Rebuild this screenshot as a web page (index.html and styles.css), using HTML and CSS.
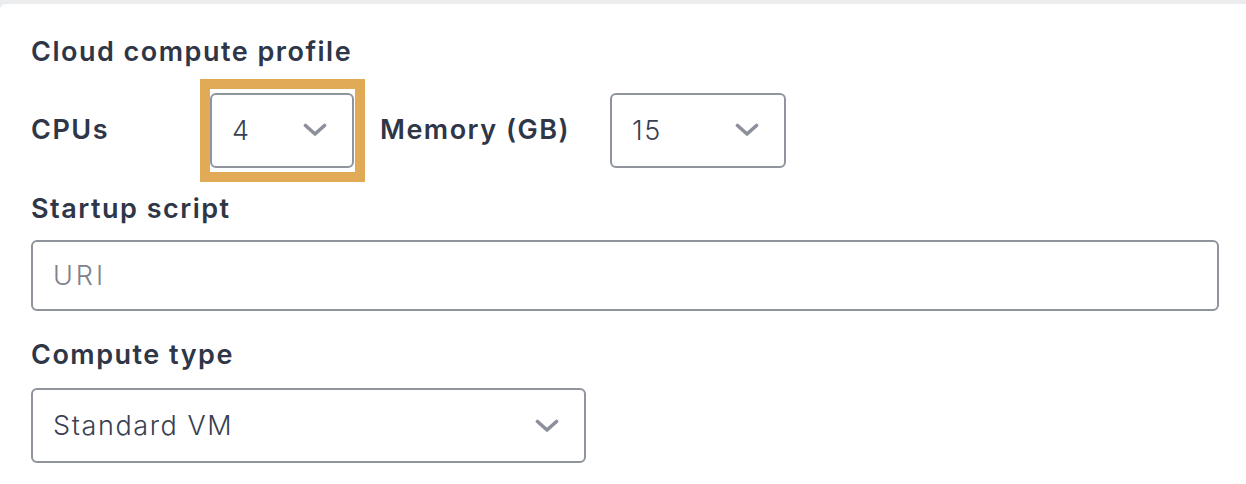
FILE: index.html
```html
<!DOCTYPE html>
<html>
<head>
<meta charset="utf-8">
<link rel="stylesheet" href="styles.css">
</head>
<body>
<div class="card">
  <div class="heading">Cloud compute profile</div>
  <div class="row">
    <div class="label cpu-label">CPUs</div>
    <div class="highlight">
      <div class="select small cpu-select"><span class="value">4</span><svg class="chev" viewBox="0 0 24 14" width="24" height="14"><path d="M2.5 2.5 L12 11 L21.5 2.5" fill="none" stroke="#8b909a" stroke-width="3.6" stroke-linecap="round" stroke-linejoin="round"/></svg></div>
    </div>
    <div class="label mem-label">Memory (GB)</div>
    <div class="select small mem-select"><span class="value">15</span><svg class="chev" viewBox="0 0 24 14" width="24" height="14"><path d="M2.5 2.5 L12 11 L21.5 2.5" fill="none" stroke="#8b909a" stroke-width="3.6" stroke-linecap="round" stroke-linejoin="round"/></svg></div>
  </div>
  <div class="label field-label startup-label">Startup script</div>
  <div class="input"><span class="placeholder">URI</span></div>
  <div class="label field-label compute-label">Compute type</div>
  <div class="select wide"><span class="value">Standard VM</span><svg class="chev" viewBox="0 0 24 14" width="24" height="14"><path d="M2.5 2.5 L12 11 L21.5 2.5" fill="none" stroke="#8b909a" stroke-width="3.6" stroke-linecap="round" stroke-linejoin="round"/></svg></div>
</div>
</body>
</html>
```
FILE: styles.css
```css
html, body {
  margin: 0;
  padding: 0;
}
body {
  background: #ebecee;
  font-family: Inter, "Open Sans", "Liberation Sans", sans-serif;
  width: 1246px;
  height: 484px;
  overflow: hidden;
}
.card {
  margin-top: 4px;
  background: #ffffff;
  border-top-left-radius: 6px;
  height: 480px;
  padding: 32px 27px 0 31px;
  box-sizing: border-box;
}
.heading, .label {
  font-size: 27px;
  font-weight: 600;
  color: #2e3647;
  line-height: 32px;
  letter-spacing: 1.5px;
}
.row {
  display: flex;
  align-items: center;
  margin-top: 10px;
  height: 104px;
}
.cpu-label {
  width: 169px;
}
.highlight {
  border: 10px solid #e0aa57;
  padding: 4px 1px 4px 0;
  display: flex;
}
.mem-label {
  margin-left: 15px;
  width: 230px;
}
.select, .input {
  box-sizing: border-box;
  border: 2px solid #8f949d;
  border-radius: 6px;
  background: #fff;
  display: flex;
  align-items: center;
  font-size: 27px;
  color: #394052;
}
.select {
  justify-content: space-between;
  padding: 0 25px 0 20px;
}
.small {
  height: 75px;
}
.cpu-select {
  width: 144px;
}
.mem-select {
  width: 176px;
}
.value {
  font-weight: 300;
  letter-spacing: 1.6px;
}
.field-label.startup-label {
  margin-top: 11px;
}
.input {
  margin-top: 15px;
  height: 71px;
  padding: 0 20px;
}
.placeholder {
  color: #7d828b;
  font-weight: 300;
  letter-spacing: 3px;
}
.field-label.compute-label {
  margin-top: 28px;
}
.wide {
  margin-top: 17px;
  width: 555px;
  height: 75px;
}
.chev {
  display: block;
}
```
